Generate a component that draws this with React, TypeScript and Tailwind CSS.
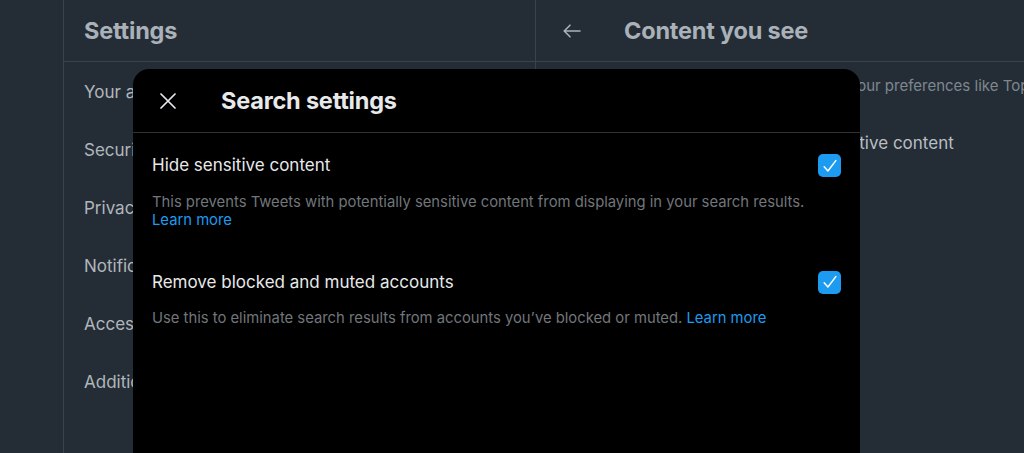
const settingsItems = ['Your account', 'Security and account access', 'Privacy and safety', 'Notifications', 'Accessibility, display, and languages', 'Additional resources'];

const searchOptions = [
  {
    title: 'Hide sensitive content',
    text: 'This prevents Tweets with potentially sensitive content from displaying in your search results.',
    breakLink: true,
  },
  {
    title: 'Remove blocked and muted accounts',
    text: 'Use this to eliminate search results from accounts you’ve blocked or muted.',
    breakLink: false,
  },
];

const Checkbox = () => (
  <div className="flex h-[23px] w-[23px] items-center justify-center rounded-[5px] bg-[#1d9bf0]">
    <svg viewBox="0 0 24 24" className="h-[20px] w-[20px]" fill="none" stroke="white" strokeWidth="1.8" strokeLinecap="round" strokeLinejoin="round">
      <path d="M5 13l4.5 5L19 5.5" />
    </svg>
  </div>
);

export default function App() {
  return (
    <div className="relative flex h-[453px] w-[1024px] overflow-hidden bg-[#242d36] font-['Inter',sans-serif]">
      <div className="w-[64px] shrink-0 border-r border-[#38434e]" />

      <div className="w-[472px] shrink-0 border-r border-[#38434e]">
        <div className="flex h-[62px] items-center border-b border-[#38434e] px-[20px]">
          <h1 className="text-[23.5px] font-bold tracking-[-0.2px] text-[#aab1b8]">Settings</h1>
        </div>
        <div className="pt-[2px]">
          {settingsItems.map((item) => (
            <div key={item} className="flex h-[58px] items-center px-[20px] text-[17px] text-[#b1b6bb]">
              {item}
            </div>
          ))}
        </div>
      </div>

      <div className="min-w-0 flex-1">
        <div className="flex h-[62px] items-center border-b border-[#38434e]">
          <svg viewBox="0 0 18 14" className="ml-[27px] h-[14px] w-[18px]" fill="none" stroke="#aab1b8" strokeWidth="1.6" strokeLinecap="round" strokeLinejoin="round">
            <path d="M17 7H1.5M7 1.2L1.2 7 7 12.8" />
          </svg>
          <h2 className="ml-[43px] text-[23.5px] font-bold tracking-[-0.2px] text-[#aab1b8]">Content you see</h2>
        </div>
        <p className="mt-[13px] whitespace-nowrap px-[16px] text-[15px] text-[#7e8790]">
          Decide what you see on Twitter based on your preferences like Topics and interests
        </p>
        <p className="mt-[33px] whitespace-nowrap pl-[26px] text-[17px] text-[#b9bec3]">
          Display media that may contain sensitive content
        </p>
      </div>

      <div className="absolute left-[133px] top-[69px] h-[420px] w-[727px] rounded-[16px] bg-black">
        <div className="flex h-[64px] items-center border-b border-[#2f3336]">
          <svg viewBox="0 0 16 16" className="ml-[27px] h-[16px] w-[16px]" fill="none" stroke="#e7e9ea" strokeWidth="1.7" strokeLinecap="round">
            <path d="M1 1l14 14M15 1L1 15" />
          </svg>
          <h3 className="ml-[45px] text-[23.5px] font-bold tracking-[-0.2px] text-[#e7e9ea]">Search settings</h3>
        </div>
        <div className="px-[19px] pt-[20px]">
          {searchOptions.map((opt) => (
            <div key={opt.title} className="mb-[41px]">
              <div className="flex items-center justify-between">
                <span className="text-[17px] text-[#e7e9ea]">{opt.title}</span>
                <Checkbox />
              </div>
              <p className="mt-[14px] text-[14.8px] leading-[18px] text-[#71767b]">
                {opt.text}
                {opt.breakLink ? <br /> : ' '}
                <span className="text-[#1d9bf0]">Learn more</span>
              </p>
            </div>
          ))}
        </div>
      </div>
    </div>
  );
}
